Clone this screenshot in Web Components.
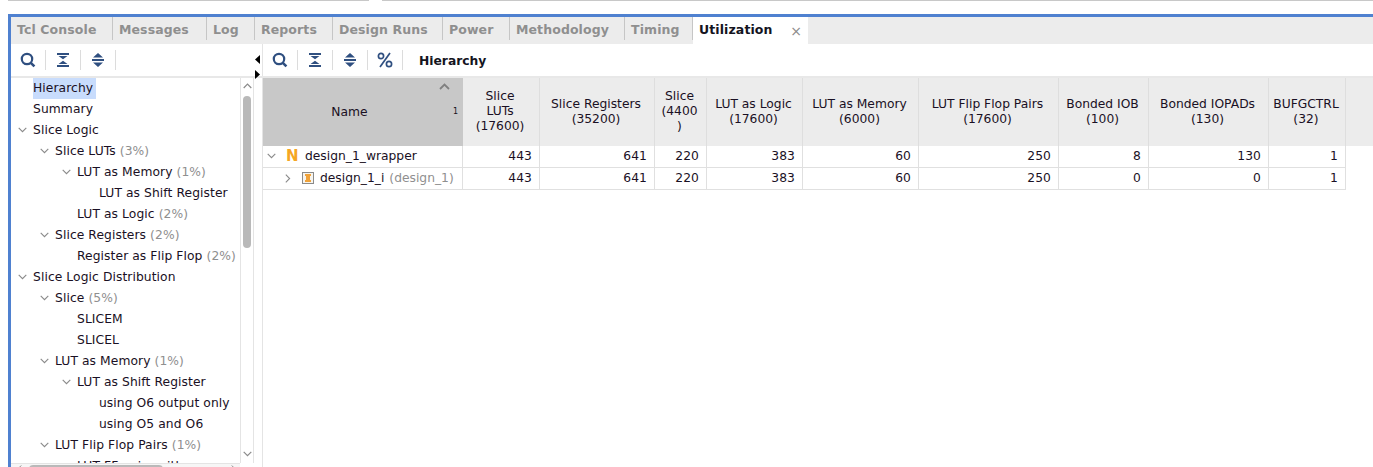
<!DOCTYPE html>
<html>
<head>
<meta charset="utf-8">
<title>Utilization</title>
<style>
  html, body { margin: 0; height: 100%; background: #fff; overflow: hidden; }
  body { font: 12.3px "DejaVu Sans", sans-serif; color: #1a1024; }
</style>
</head>
<body>
<util-window></util-window>

<template id="icons">
  <svg data-name="search" width="16" height="16" viewBox="0 0 16 16"><circle cx="7" cy="7" r="5.2" fill="none" stroke="#2f4f80" stroke-width="2.2"/><path d="M10.8 10.8l3.6 3.6" stroke="#2f4f80" stroke-width="2.6"/></svg>
  <svg data-name="collapse" width="14" height="16" viewBox="0 0 14 16"><path d="M1 1h12v2H1zM1 13h12v2H1z" fill="#2f4f80"/><path d="M2.5 4h9L7 7.2zM2.5 12h9L7 8.8z" fill="#2f4f80"/></svg>
  <svg data-name="expand" width="14" height="16" viewBox="0 0 14 16"><path d="M2 5.6L7 1l5 4.6zM2 10.4L7 15l5-4.6zM1 6.9h12v2.2H1z" fill="#2f4f80"/></svg>
  <svg data-name="percent" width="16" height="16" viewBox="0 0 16 16"><g fill="none" stroke="#2f4f80" stroke-width="1.7"><ellipse cx="4" cy="4" rx="2.6" ry="2.7"/><ellipse cx="12" cy="12" rx="2.6" ry="2.7"/><path d="M13 1L3 15"/></g></svg>
</template>

<script>
const iconTpl = document.getElementById("icons");
const icon = name => iconTpl.content.querySelector(`[data-name="${name}"]`).outerHTML;
const chevDown = `<svg width="9" height="6" viewBox="0 0 9 6"><path d="M.7.8l3.8 3.8L8.3.8" fill="none" stroke="#8a8a8a" stroke-width="1.1"/></svg>`;
const chevRight = `<svg width="6" height="9" viewBox="0 0 6 9"><path d="M.8.7l3.8 3.8L.8 8.3" fill="none" stroke="#8a8a8a" stroke-width="1.1"/></svg>`;

class TabBar extends HTMLElement {
  constructor() {
    super();
    this.attachShadow({ mode: "open" });
    this.shadowRoot.innerHTML = `
      <style>
        :host { display: flex; flex: none; height: 27px; background: #ececec; }
      </style>
      <slot></slot>`;
  }
}

class TabItem extends HTMLElement {
  constructor() {
    super();
    this.attachShadow({ mode: "open" });
    const active = this.hasAttribute("active");
    this.shadowRoot.innerHTML = `
      <style>
        :host {
          display: flex; align-items: center; box-sizing: border-box; height: 27px; flex: none;
          width: ${this.getAttribute("w")}px; padding: 0 0 3px 6px;
          font-weight: bold; font-size: 12.5px; letter-spacing: .1px; color: #8f8f8f; white-space: nowrap;
          background: linear-gradient(#c6c6c6, #c6c6c6) right top / 1px 23px no-repeat;
        }
        :host([active]) { background: #fff; color: #14141e; justify-content: space-between; padding-right: 6px; }
        .close { color: #8a8a8a; font-weight: normal; font-size: 14px; margin-top: 4px; }
      </style>
      <slot></slot>${active ? `<span class="close">×</span>` : ""}`;
  }
}

class ToolBar extends HTMLElement {
  constructor() {
    super();
    this.attachShadow({ mode: "open" });
    const items = (this.getAttribute("icons") || "").split(" ");
    this.shadowRoot.innerHTML = `
      <style>
        :host { display: flex; align-items: center; height: 32px; box-sizing: border-box; background: #fff; }
        .wrap { display: flex; align-items: center; }
        .b { width: 35px; height: 20px; display: flex; align-items: center; justify-content: center; border-right: 1px solid #dcdcdc; box-sizing: border-box; }
        .title { margin-left: 16px; padding-top: 2px; font-weight: bold; color: #14141e; }
      </style>
      <div class="wrap">${items.map(i => `<div class="b">${icon(i)}</div>`).join("")}</div>
      <div class="title"><slot></slot></div>`;
  }
}

class TreeRow extends HTMLElement {
  constructor() {
    super();
    this.attachShadow({ mode: "open" });
    const level = Number(this.getAttribute("level") || 0);
    const open = this.hasAttribute("open");
    const pct = this.getAttribute("pct");
    this.shadowRoot.innerHTML = `
      <style>
        :host { display: flex; height: 21px; flex: none; white-space: nowrap; padding-left: ${level * 22}px; box-sizing: border-box; letter-spacing: .08px; }
        .chev { width: 22px; flex: none; display: flex; align-items: center; padding: 0 0 1px 7px; box-sizing: border-box; }
        .label { line-height: 20px; padding-bottom: 1px; }
        :host([selected]) .label { background: #c8dcfc; padding-right: 3px; }
        .pct { color: #8f8f8f; margin-left: 4px; line-height: 20px; }
      </style>
      <div class="chev">${open ? chevDown : ""}</div>
      <span class="label"><slot></slot></span>${pct ? `<span class="pct">(${pct})</span>` : ""}`;
  }
}

class ScrollTrack extends HTMLElement {
  constructor() {
    super();
    this.attachShadow({ mode: "open" });
    this.shadowRoot.innerHTML = `
      <style>
        :host { position: absolute; background: #fff; }
        :host([dir="v"]) { right: 8px; top: 0; bottom: 4px; width: 14px; border-left: 1px solid #e4e4e4; border-right: 1px solid #e4e4e4; box-sizing: border-box; }
        :host([dir="h"]) { left: 0; right: 22px; bottom: 0; height: 4px; background: #f6f6f6; border-top: 1px solid #e4e4e4; box-sizing: border-box; overflow: hidden; }
        .thumb { position: absolute; background: #b9b9b9; border-radius: 4px; }
        :host([dir="v"]) .thumb { left: 2px; width: 8px; top: 18px; height: 152px; }
        :host([dir="h"]) .thumb { left: 18px; width: 134px; top: 1px; height: 8px; }
        svg { position: absolute; }
        .up { left: 2px; top: 5px; } .down { left: 2px; bottom: 6px; }
        .l { left: 6px; top: 1px; } .r { right: 4px; top: 1px; }
      </style>
      <div class="thumb"></div>
      ${this.getAttribute("dir") === "v" ? `
      <svg class="up" width="9" height="6" viewBox="0 0 9 6"><path d="M.7 5l3.8-3.8L8.3 5" fill="none" stroke="#8a8a8a" stroke-width="1.2"/></svg>
      <svg class="down" width="9" height="6" viewBox="0 0 9 6"><path d="M.7.8l3.8 3.8L8.3.8" fill="none" stroke="#8a8a8a" stroke-width="1.2"/></svg>` : `
      <svg class="l" width="5" height="8" viewBox="0 0 5 8"><path d="M4.2.5L.8 4l3.4 3.5" fill="none" stroke="#8a8a8a"/></svg>
      <svg class="r" width="5" height="8" viewBox="0 0 5 8"><path d="M.8.5L4.2 4 .8 7.5" fill="none" stroke="#8a8a8a"/></svg>`}`;
  }
}

class TreePane extends HTMLElement {
  constructor() {
    super();
    this.attachShadow({ mode: "open" });
    this.shadowRoot.innerHTML = `
      <style>
        :host { display: flex; flex-direction: column; position: relative; width: 252px; flex: none; overflow: hidden; min-height: 0; border-right: 1px solid #e4e4e4; box-sizing: border-box; }
        .rows { display: flex; flex-direction: column; overflow: hidden; flex: 1; min-height: 0; }
      </style>
      <div class="rows"><slot></slot></div>
      <scroll-track dir="v"></scroll-track>
      <scroll-track dir="h"></scroll-track>`;
  }
}

const COLS = [200, 77, 115, 52, 96, 116, 140, 90, 120, 77];

class HeadCell extends HTMLElement {
  constructor() {
    super();
    this.attachShadow({ mode: "open" });
    this.shadowRoot.innerHTML = `
      <style>
        :host { display: flex; align-items: center; justify-content: center; text-align: center; background: #ececec; border-right: 1px solid #dedede; box-sizing: border-box; position: relative; padding: 0 4px 0 2px; line-height: 15px; }
        :host([tall]) { padding-bottom: 2px; }
        :host([sorted]) { background: #c8c8c8; border-right: 0; padding-right: 29px; }
        .caret { position: absolute; right: 13px; top: 5px; }
        .idx { position: absolute; right: 5px; top: 26px; font-size: 8px; color: #14141e; }
      </style>
      <span><slot></slot></span>
      ${this.hasAttribute("sorted") ? `<svg class="caret" width="11" height="7" viewBox="0 0 11 7"><path d="M1 6l4.5-4.5L10 6" fill="none" stroke="#808080" stroke-width="1.8"/></svg><span class="idx">1</span>` : ""}`;
  }
}

class DataCell extends HTMLElement {
  constructor() {
    super();
    this.attachShadow({ mode: "open" });
    this.shadowRoot.innerHTML = `
      <style>
        :host { display: flex; align-items: center; justify-content: flex-end; padding: 0 7px 1px 0; box-sizing: border-box; border-right: 1px solid #e0e0e0; border-bottom: 1px solid #e0e0e0; white-space: nowrap; letter-spacing: .1px; }
        :host([name]) { justify-content: flex-start; padding: 0 0 1px 4px; letter-spacing: 0; }
      </style>
      <slot name="lead"></slot><slot></slot>`;
  }
}

class UtilGrid extends HTMLElement {
  constructor() {
    super();
    this.attachShadow({ mode: "open" });
    this.shadowRoot.innerHTML = `
      <style>
        :host { display: grid; flex: 1; align-content: start; grid-template-columns: ${COLS.map(c => c + "px").join(" ")} 1fr; grid-template-rows: 68px 22px 22px; }
      </style>
      <slot></slot>`;
  }
}

class UtilWindow extends HTMLElement {
  constructor() {
    super();
    this.attachShadow({ mode: "open" });
    const tree = [
      [0, "Hierarchy", "", 0, 1], [0, "Summary", "", 0], [0, "Slice Logic", "", 1],
      [1, "Slice LUTs", "3%", 1], [2, "LUT as Memory", "1%", 1], [3, "LUT as Shift Register", "", 0],
      [2, "LUT as Logic", "2%", 0], [1, "Slice Registers", "2%", 1], [2, "Register as Flip Flop", "2%", 0],
      [0, "Slice Logic Distribution", "", 1], [1, "Slice", "5%", 1], [2, "SLICEM", "", 0], [2, "SLICEL", "", 0],
      [1, "LUT as Memory", "1%", 1], [2, "LUT as Shift Register", "", 1], [3, "using O6 output only", "", 0],
      [3, "using O5 and O6", "", 0], [1, "LUT Flip Flop Pairs", "1%", 1], [2, "LUT FF pairs with", "", 0]
    ];
    const heads = ["Name", "Slice<br>LUTs<br>(17600)", "Slice Registers<br>(35200)", "Slice<br>(4400<br>)", "LUT as Logic<br>(17600)", "LUT as Memory<br>(6000)", "LUT Flip Flop Pairs<br>(17600)", "Bonded IOB<br>(100)", "Bonded IOPADs<br>(130)", "BUFGCTRL<br>(32)"];
    const r1 = [443, 641, 220, 383, 60, 250, 8, 130, 1];
    const r2 = [443, 641, 220, 383, 60, 250, 0, 0, 1];
    const tabs = [["Tcl Console", 102], ["Messages", 94], ["Log", 48], ["Reports", 78], ["Design Runs", 110], ["Power", 67], ["Methodology", 115], ["Timing", 68]];
    this.shadowRoot.innerHTML = `
      <style>
        :host { display: block; width: 1373px; height: 467px; overflow: hidden; position: relative; }
        .top { display: flex; height: 2px; gap: 13px; padding-left: 8px; margin-bottom: 12px; }
        .top i { height: 1px; background: #c8c8c8; }
        .top i:first-child { width: 361px; } .top i:last-child { flex: 1; }
        .frame { border-top: 3px solid #4f81d0; border-left: 3px solid #4f81d0; margin-left: 8px; height: 453px; box-sizing: border-box; display: flex; flex-direction: column; }
        .split { display: flex; flex: 1; min-height: 0; }
        .bars { display: flex; flex: none; border-bottom: 2px solid #e8e8e8; }
        .bars tool-bar:first-child { width: 252px; flex: none; border-right: 1px solid #e4e4e4; }
        .bars tool-bar:last-child { flex: 1; }
        .arrows { position: absolute; left: 255px; top: 55px; width: 6px; height: 24px; }
        .arrows svg { position: absolute; left: 0; }
        .lead { display: inline-flex; align-items: center; }
        .n { color: #f5a623; font-weight: bold; font-size: 15px; width: 19px; }
        .filler { background: #ececec; }
        .grp { margin-right: 6px; }
        .tail { color: #8f8f8f; margin-left: 5px; }
      </style>
      <div class="top"><i></i><i></i></div>
      <div class="frame">
        <tab-bar>
          ${tabs.map(([t, w]) => `<tab-item w="${w}">${t}</tab-item>`).join("")}
          <tab-item active w="115">Utilization</tab-item>
        </tab-bar>
        <div class="bars">
          <tool-bar icons="search collapse expand"></tool-bar>
          <tool-bar icons="search collapse expand percent">Hierarchy</tool-bar>
        </div>
        <div class="split">
          <tree-pane>
            ${tree.map(([l, t, p, o, s]) => `<tree-row level="${l}" ${p ? `pct="${p}"` : ""} ${o ? "open" : ""} ${s ? "selected" : ""}>${t}</tree-row>`).join("")}
          </tree-pane>
          <util-grid>
            ${heads.map((h, i) => `<head-cell ${i === 0 ? "sorted" : ""} ${h.split("<br>").length === 3 ? "tall" : ""}>${h}</head-cell>`).join("")}
            <div class="filler"></div>
            <data-cell name><span class="lead" slot="lead" style="width:19px">${chevDown}</span><span class="lead n" slot="lead">N</span>design_1_wrapper</data-cell>
            ${r1.map(v => `<data-cell>${v}</data-cell>`).join("")}
            <div></div>
            <data-cell name><span class="lead" slot="lead" style="width:35px;padding-left:18px;box-sizing:border-box">${chevRight}</span><svg class="lead grp" slot="lead" width="12" height="12" viewBox="0 0 12 12"><rect x=".5" y=".5" width="11" height="11" fill="#f6f4ee" stroke="#8a8a8a"/><path d="M3 2h6v2H8v4h1v2H3V8h1V4H3z" fill="#f0a23a"/></svg><span>design_1_i<span class="tail">(design_1)</span></span></data-cell>
            ${r2.map(v => `<data-cell>${v}</data-cell>`).join("")}
            <div></div>
          </util-grid>
        </div>
      </div>
      <div class="arrows">
        <svg style="top:0" width="6" height="9" viewBox="0 0 6 9"><path d="M5 0v9L0 4.5z" fill="#000"/></svg>
        <svg style="top:15px" width="6" height="9" viewBox="0 0 6 9"><path d="M0 0v9l5-4.5z" fill="#000"/></svg>
      </div>`;
  }
}

customElements.define("tab-bar", TabBar);
customElements.define("tab-item", TabItem);
customElements.define("tool-bar", ToolBar);
customElements.define("tree-row", TreeRow);
customElements.define("scroll-track", ScrollTrack);
customElements.define("tree-pane", TreePane);
customElements.define("head-cell", HeadCell);
customElements.define("data-cell", DataCell);
customElements.define("util-grid", UtilGrid);
customElements.define("util-window", UtilWindow);
</script>
</body>
</html>
